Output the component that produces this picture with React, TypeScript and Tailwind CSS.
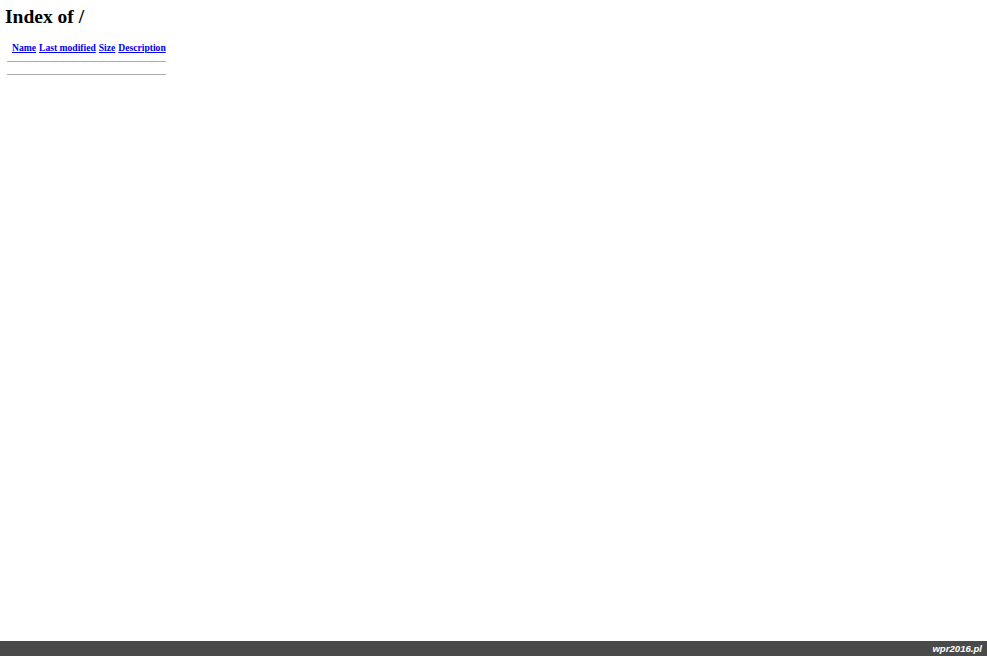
import React from 'react';

const columns = ['Name', 'Last modified', 'Size', 'Description'];

export default function App() {
  return (
    <div className="flex h-[656px] flex-col justify-between bg-white font-['Liberation_Serif',serif] text-black">
      <div className="px-[5px] pt-[6px]">
        <h1 className="text-[19.5px] font-bold leading-[22px]">Index of /</h1>
        <table className="mt-[12px] border-separate border-spacing-[1px]">
          <tbody>
            <tr>
              <th className="w-[4px] p-[1px]"></th>
              {columns.map(col => (
                <th key={col} className="p-[1px] text-left text-[9.6px] font-bold leading-[11px]">
                  <a href="#" className="text-[#0000ee] underline">
                    {col}
                  </a>
                </th>
              ))}
            </tr>
            <tr>
              <th colSpan={5} className="p-[1px]">
                <div className="my-[5px] h-px bg-[#ababab]" />
              </th>
            </tr>
            <tr>
              <th colSpan={5} className="p-[1px]">
                <div className="mt-[4px] mb-[5px] h-px bg-[#ababab]" />
              </th>
            </tr>
          </tbody>
        </table>
      </div>

      {/* footer bar */}
      <div className="flex h-[15px] items-center justify-end bg-[#4a4a4a] pr-[5px]">
        <span className="font-['Liberation_Sans',sans-serif] text-[9.6px] font-bold italic leading-none text-white">
          wpr2016.pl
        </span>
      </div>
    </div>
  );
}
